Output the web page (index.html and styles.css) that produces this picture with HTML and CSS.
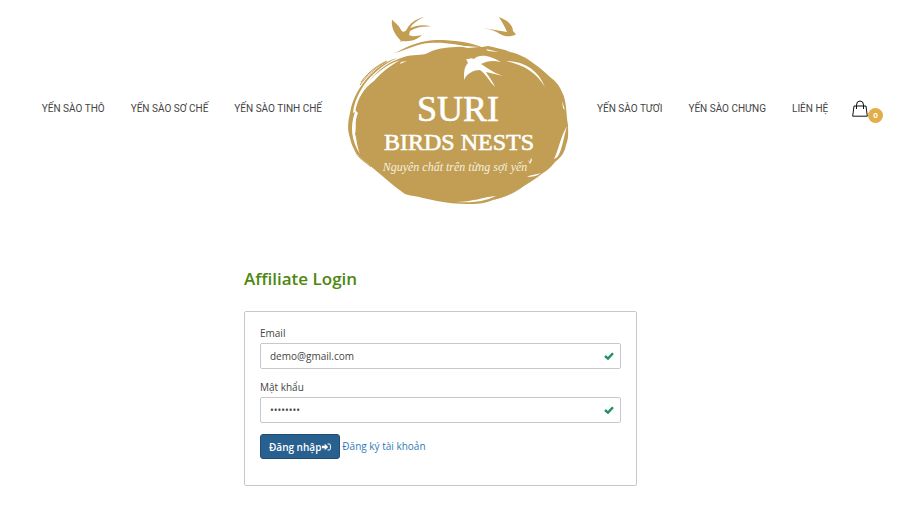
FILE: index.html
```
<!DOCTYPE html>
<html lang="vi">
<head>
<meta charset="utf-8">
<meta name="viewport" content="width=device-width, initial-scale=1">
<title>Affiliate Login - Suri Birds Nests</title>
<link rel="stylesheet" href="styles.css">
</head>
<body>
<header class="site-header">
  <nav class="nav nav-left">
    <a href="#">YẾN SÀO THÔ</a>
    <a href="#">YẾN SÀO SƠ CHẾ</a>
    <a href="#">YẾN SÀO TINH CHẾ</a>
  </nav>
  <a class="logo" href="#">
    <svg viewBox="340 5 235 205" role="img" aria-label="Suri Birds Nests">
      <g class="gold">
        <path d="M355 112C358 98 363 88 371 79C379 69 390 61 404 57C413 54 421 56 428 53C436 49 444 46 482 47L488 46C496 48 504 49 510 52C519 54 527 58 533 63C540 68 545 72 550 77C557 82 560 87 562 92C567 101 566 115 568 125C568 132 569 138 566 145C565 151 562 157 555 162C551 167 548 170 543 173C534 180 526 185 517 190C509 195 502 198 493 200C484 204 476 204 467 204C457 204 447 203 437 201L423 198C416 196 411 196 405 194C399 190 393 185 387 180C380 174 373 168 367 163C359 158 352 149 350 138C347 129 348 122 350 113C352 101 357 91 364 82C374 69 386 61 397 58C382 65 371 75 364 85C358 94 354 103 353 113Z"/>
        <path d="M395 53C410 45 423 40 437 40C454 40 470 42 484 48L475 49C458 44 444 42 429 43C417 44 406 50 395 53Z"/>
        <path d="M392 19.500C391 27 394 34 401 41C398 42 400 42 403 41C411 42 418 39 422 35C417 36 413 37 409 35L410 31C416 27 423 26 431 26.500C423 24 416 26 410 28C413 23 418 20 424 17C416 19 410 23 407 29C405 32 403 33 401 30C399 25 395 23 392 19.500Z"/>
        <path d="M499 17C507 20 513 25 513 31L516 34.500C511 37 505 37 500 34C496 31 489 29 483 28L501 31L507 32C505 27 502 22 499 17Z"/>
      </g>
      <g class="paper">
        <path d="M355 112C350 126 351 140 360 154C356 144 357 139 355 134C357 126 354 122 358 113L355 110C358 98 364 88 374 81C383 71 390 66 400 60C386 64 371 77 364 88C359 96 356 103 355 112Z"/>
        <path d="M400 64L407 61L401 62ZM486 49L499 52L488 51ZM452 45L479 47L468 48Z"/>
        <path d="M464 80C464 72 464 67 468 63L466 59C469 60 470 57 474 59C480 53 491 56 501 62C493 60 487 61 481 64C487 68 496 74 503 76L486 72C489 77 493 82 495 87C490 82 485 73 480 70C474 70 467 73 464 80Z"/>
        <path d="M506 61C524 61 538 70 545 87C536 72 524 65 506 61ZM562 101L565 110L563 108ZM567 126C564 136 563 146 558 157L554 159C559 149 560 138 567 126ZM527 177C532 174 536 175 541 173C537 176 532 177 527 177ZM456 202C472 202 484 197 496 196C484 202 470 203 456 202Z"/>
        <path d="M528 160L530 162L531 158L532 160L530 164Z"/>
      </g>
      <g class="lines">
        <path d="M361 82C370 70 380 64 387 61M360 85C367 75 376 67 386 62M355 150C358 159 366 162 371 167M495 199C505 196 515 193 523 186M563 148C559 159 550 163 544 170"/>
      </g>
      <text class="brand" x="458" y="121">SURI</text>
      <text class="brand-sub" x="459" y="150">BIRDS NESTS</text>
      <text class="slogan" x="455" y="171">Nguyên chất trên từng sợi yến</text>
    </svg>
  </a>
  <div class="header-right">
    <nav class="nav">
      <a href="#">YẾN SÀO TƯƠI</a>
      <a href="#">YẾN SÀO CHƯNG</a>
      <a href="#">LIÊN HỆ</a>
    </nav>
    <a class="cart" href="#" aria-label="Giỏ hàng">
      <svg viewBox="0 0 16 17" aria-hidden="true"><path d="M2 6H14L15.300 16.200H.7ZM4.500 9V5Q4.500 1 8 1T11.500 5V9"/><path d="M4 8.500H5M11 8.500H12"/></svg>
      <span class="cart-count">0</span>
    </a>
  </div>
</header>
<main class="page">
  <section class="login">
    <h1>Affiliate Login</h1>
    <form class="card">
      <label for="email">Email</label>
      <div class="field">
        <input id="email" type="email" value="demo@gmail.com">
        <svg class="tick" viewBox="0 0 10 8" aria-hidden="true"><path d="M1 4L4 6.600L9 1.300"/></svg>
      </div>
      <label for="password">Mật khẩu</label>
      <div class="field">
        <input id="password" type="password" value="demodemo">
        <svg class="tick" viewBox="0 0 10 8" aria-hidden="true"><path d="M1 4L4 6.600L9 1.300"/></svg>
      </div>
      <div class="actions">
        <button type="submit">Đăng nhập
          <svg viewBox="0 0 9 8" aria-hidden="true"><path class="solid" d="M0 2.700H2.700V.7L6.200 4L2.700 7.300V5.300H0Z"/><path class="edge" d="M5.500 1H7Q8.400 1 8.400 2.200V5.800Q8.400 7 7 7H5.500"/></svg>
        </button>
        <a href="#">Đăng ký tài khoản</a>
      </div>
    </form>
  </section>
</main>
</body>
</html>
```
FILE: styles.css
```
* {
  box-sizing: border-box;
}

body {
  margin: 0;
  background: #fff;
  color: #444;
  font: 10px/14px "Open Sans", "Noto Sans", sans-serif;
}

a {
  color: #337ab7;
  text-decoration: none;
}

.site-header {
  display: grid;
  grid-template-columns: 1fr 235px 1fr;
  align-items: center;
  padding: 5px 17px 0 32px;
}

.nav {
  display: flex;
  gap: 26px;
  padding-top: 2px;
  white-space: nowrap;
}

.nav a {
  color: #444;
  font: 10px/16px Roboto, sans-serif;
}

.nav-left {
  justify-content: flex-end;
  padding-right: 18px;
}

.logo svg {
  display: block;
  width: 100%;
}

.gold {
  fill: #c19e53;
}

.paper {
  fill: #fff;
}

.lines {
  fill: none;
  stroke: #c19e53;
}

.logo text {
  fill: #fff;
  font-family: "Liberation Serif", serif;
  text-anchor: middle;
}

.logo .brand {
  font-size: 36px;
  stroke: #fff;
  stroke-width: 0.6;
}

.logo .brand-sub {
  font-size: 24px;
  stroke: #fff;
  stroke-width: 0.6;
}

.logo .slogan {
  fill: #f6efdf;
  font-size: 12px;
  font-style: italic;
}

.header-right {
  display: flex;
  align-items: center;
  justify-content: space-between;
  padding: 2px 0 0 22px;
}

.header-right .nav {
  padding-top: 0;
}

.cart {
  position: relative;
  width: 31px;
  height: 17px;
}

.cart svg {
  display: block;
  width: 16px;
  height: 17px;
  fill: none;
  stroke: #111;
}

.cart-count {
  position: absolute;
  top: 8px;
  right: 0;
  width: 15px;
  height: 15px;
  border-radius: 50%;
  background: #e2ae4a;
  color: #fff;
  font: bold 8px/15px Roboto, sans-serif;
  text-align: center;
}

.page {
  padding: 57px 19px 26px 0;
}

.login {
  max-width: 393px;
  margin: 0 auto;
}

h1 {
  margin: 0 0 20px;
  color: #4d8710;
  font-size: 17px;
  font-weight: 600;
  line-height: 24px;
}

.card {
  padding: 14px 15px 26px;
  border: 1px solid #c8c8c8;
  border-radius: 2px;
}

label {
  display: block;
  margin-bottom: 3px;
}

.field {
  position: relative;
  margin-bottom: 11px;
}

input {
  display: block;
  width: 100%;
  height: 26px;
  padding: 0 24px 0 9px;
  border: 1px solid #c8c8c8;
  border-radius: 2px;
  background: #fff;
  color: #444;
  font: inherit;
}

.tick {
  position: absolute;
  top: 9px;
  right: 7px;
  width: 10px;
  height: 8px;
  fill: none;
  stroke: #23905f;
  stroke-width: 2.4;
}

.actions {
  display: flex;
  align-items: center;
  gap: 2px;
}

.actions a {
  padding-bottom: 2px;
}

button {
  display: flex;
  align-items: center;
  gap: 1px;
  height: 25px;
  padding: 0 8px;
  border: 1px solid #204d74;
  border-radius: 3px;
  background: #286090;
  color: #fff;
  font: 600 10px/14px "Open Sans", sans-serif;
}

button svg {
  width: 9px;
  height: 8px;
}

.solid {
  fill: #fff;
}

.edge {
  fill: none;
  stroke: #fff;
}
```
